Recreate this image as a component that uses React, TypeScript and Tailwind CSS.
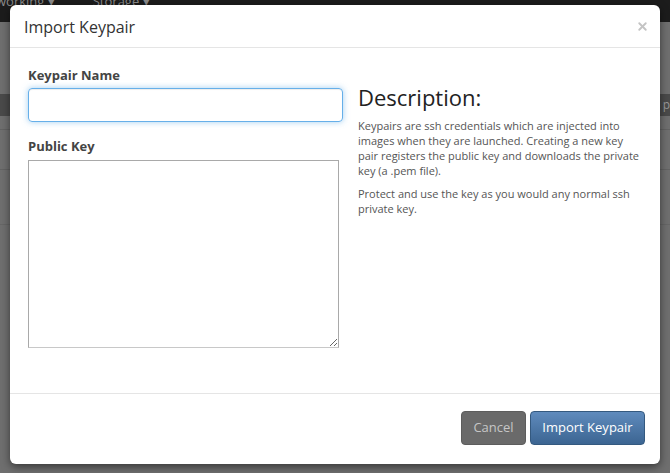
import { X } from 'lucide-react';

const font = { fontFamily: '"Open Sans", "Noto Sans", sans-serif' };

const App = () => {
  return (
    <div className="relative w-[670px] h-[473px] overflow-hidden bg-[#6f6f6f]" style={font}>
      {/* page behind the backdrop */}
      <div className="h-[22px] bg-[#1c1c1c] flex items-start gap-[38px] text-[13px] text-[#8a8a8a] leading-[12px] overflow-hidden">
        <span className="-mt-[5px] -ml-[4px]">working ▾</span>
        <span className="-mt-[5px]">Storage ▾</span>
      </div>
      <div className="h-[72px] bg-[#6f6f6f]" />
      <div className="h-[22px] bg-[#4a4a4a] flex justify-end text-[12px] text-[#999] leading-[22px]">p</div>
      <div className="h-[14px] border-b border-[#636363]" />
      <div className="h-[40px] border-b border-[#636363]" />
      <div className="h-[55px] border-b border-[#666]" />

      {/* modal */}
      <div className="absolute left-[10px] top-[5px] w-[650px] h-[459px] bg-white rounded-[6px] shadow-[0_3px_9px_rgba(0,0,0,0.5)] flex flex-col">
        <div className="h-[43px] border-b border-[#e5e5e5] flex items-center justify-between pl-[14px] pr-[11px]">
          <h3 className="text-[16px] text-[#333] mt-[2px]">Import Keypair</h3>
          <X size={13} strokeWidth={3.5} className="text-[#c4c4c4]" />
        </div>

        <div className="flex-1 flex pl-[18px] pr-[5px] pt-[18px]">
          <div className="w-[315px] flex flex-col">
            <label className="text-[13px] font-bold text-[#444] leading-[18px]">Keypair Name</label>
            <input
              type="text"
              className="mt-[4px] h-[34px] w-[315px] rounded-[4px] border border-[#66afe9] shadow-[inset_0_1px_1px_rgba(0,0,0,0.075),0_0_6px_rgba(102,175,233,0.6)] outline-none"
            />
            <label className="mt-[15px] text-[13px] font-bold text-[#444] leading-[18px]">Public Key</label>
            <textarea className="mt-[5px] h-[188px] w-[311px] border border-[#a9a9a9] border-b-[#c8c8c8] outline-none resize" />
          </div>
          <div className="ml-[15px] w-[290px] text-[#555]">
            <h2 className="text-[22px] text-[#222] leading-[30px] mt-[16px]">Description:</h2>
            <p className="mt-[6px] text-[11px] leading-[15px]">
              Keypairs are ssh credentials which are injected into images when they are launched. Creating a new key<br />pair registers the public key and downloads the private key (a .pem file).
            </p>
            <p className="mt-[8px] text-[11px] leading-[15px]">
              Protect and use the key as you would any normal ssh private key.
            </p>
          </div>
        </div>

        <div className="h-[71px] border-t border-[#e5e5e5] flex items-center justify-end gap-[4px] pr-[15px] pb-[3px]">
          <button className="h-[34px] w-[65px] rounded-[4px] bg-[#6a6a6a] border border-[#5d5d5d] text-[13px] text-[#c6c6c6]">Cancel</button>
          <button className="h-[34px] w-[115px] rounded-[4px] bg-gradient-to-b from-[#5f8bbd] to-[#3c6592] border border-[#34597f] text-[13px] text-white">Import Keypair</button>
        </div>
      </div>
    </div>
  );
};

export default App;
